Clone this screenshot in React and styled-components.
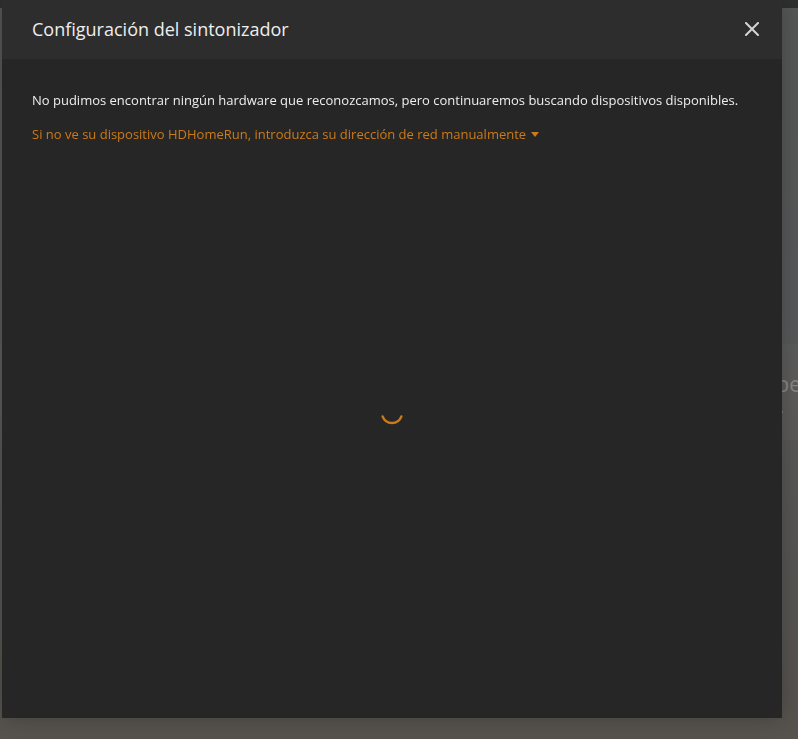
import React from "react";
import styled, { createGlobalStyle } from "styled-components";

const Global = createGlobalStyle`
  html, body { margin: 0; padding: 0; height: 100%; }
  body {
    background: #57534f;
    font-family: "Open Sans", "Noto Sans", sans-serif;
    overflow: hidden;
  }
`;

const Page = styled.div`
  display: flex;
  flex-direction: column;
  height: 739px;
  background: linear-gradient(180deg, #555857 0%, #58595a 45%, #57534e 100%);
`;

const TopBar = styled.div`
  height: 8px;
  background: #2f3030;
`;

const PageBody = styled.div`
  flex: 1;
  display: flex;
  flex-direction: column;
  padding-top: 336px;
`;

const HeroBand = styled.div`
  height: 96px;
  background: rgba(110, 106, 102, 0.22);
  display: flex;
  flex-direction: column;
  align-items: flex-end;
  padding-top: 30px;
  box-sizing: border-box;
  color: #8a8885;
  font-size: 21px;
  line-height: 1;
  overflow: hidden;
`;

const BandText = styled.span`
  white-space: nowrap;
  margin-right: -3px;
`;

const BandDot = styled.span`
  font-size: 14px;
  margin-top: 6px;
  margin-right: 14px;
`;

const Modal = styled.div`
  position: fixed;
  left: 2px;
  top: 0;
  width: 780px;
  height: 718px;
  background: #262626;
  display: flex;
  flex-direction: column;
  box-shadow: 0 0 24px rgba(0, 0, 0, 0.25);
`;

const Header = styled.div`
  height: 59px;
  flex-shrink: 0;
  background: #2d2d2d;
  display: flex;
  align-items: center;
  justify-content: space-between;
  padding: 0 22px 2px 30px;
  box-sizing: border-box;
`;

const Title = styled.h2`
  margin: 0;
  font-size: 18px;
  font-weight: 400;
  color: #eeeeee;
`;

const CloseButton = styled.button`
  background: none;
  border: 0;
  padding: 0;
  width: 16px;
  height: 16px;
  display: flex;
  align-items: center;
  justify-content: center;
  cursor: pointer;
`;

const Body = styled.div`
  flex: 1;
  display: flex;
  flex-direction: column;
  padding: 32px 30px 0 30px;
`;

const Message = styled.p`
  margin: 0;
  font-size: 13px;
  line-height: 18px;
  color: #eeeeee;
`;

const Link = styled.a`
  margin-top: 16px;
  font-size: 13px;
  line-height: 18px;
  color: #cc7b19;
  display: inline-flex;
  align-items: center;
  gap: 5px;
  cursor: pointer;
  text-decoration: none;
`;

const Caret = styled.span`
  width: 0;
  height: 0;
  border-left: 4px solid transparent;
  border-right: 4px solid transparent;
  border-top: 5px solid #cc7b19;
  margin-top: 1px;
`;

const SpinnerArea = styled.div`
  flex: 1;
  display: flex;
  justify-content: center;
  padding-top: 256px;
`;

const Spinner = () => (
  <svg width="26" height="26" viewBox="0 0 26 26">
    <path
      d="M3.6 16.4 A10 10 0 0 0 22.4 16.4"
      fill="none"
      stroke="#cc7b19"
      strokeWidth="2.4"
      strokeLinecap="round"
    />
  </svg>
);

export default function App() {
  return (
    <>
      <Global />
      <Page>
        <TopBar />
        <PageBody>
          <HeroBand>
            <BandText>pe</BandText>
            <BandDot>.</BandDot>
          </HeroBand>
        </PageBody>
      </Page>
      <Modal>
        <Header>
          <Title>Configuración del sintonizador</Title>
          <CloseButton aria-label="Cerrar">
            <svg width="14" height="14" viewBox="0 0 14 14">
              <path d="M1 1 L13 13 M13 1 L1 13" stroke="#d4d4d4" strokeWidth="2" strokeLinecap="square" />
            </svg>
          </CloseButton>
        </Header>
        <Body>
          <Message>
            No pudimos encontrar ningún hardware que reconozcamos, pero continuaremos buscando dispositivos disponibles.
          </Message>
          <div>
            <Link>
              Si no ve su dispositivo HDHomeRun, introduzca su dirección de red manualmente
              <Caret />
            </Link>
          </div>
          <SpinnerArea>
            <Spinner />
          </SpinnerArea>
        </Body>
      </Modal>
    </>
  );
}
